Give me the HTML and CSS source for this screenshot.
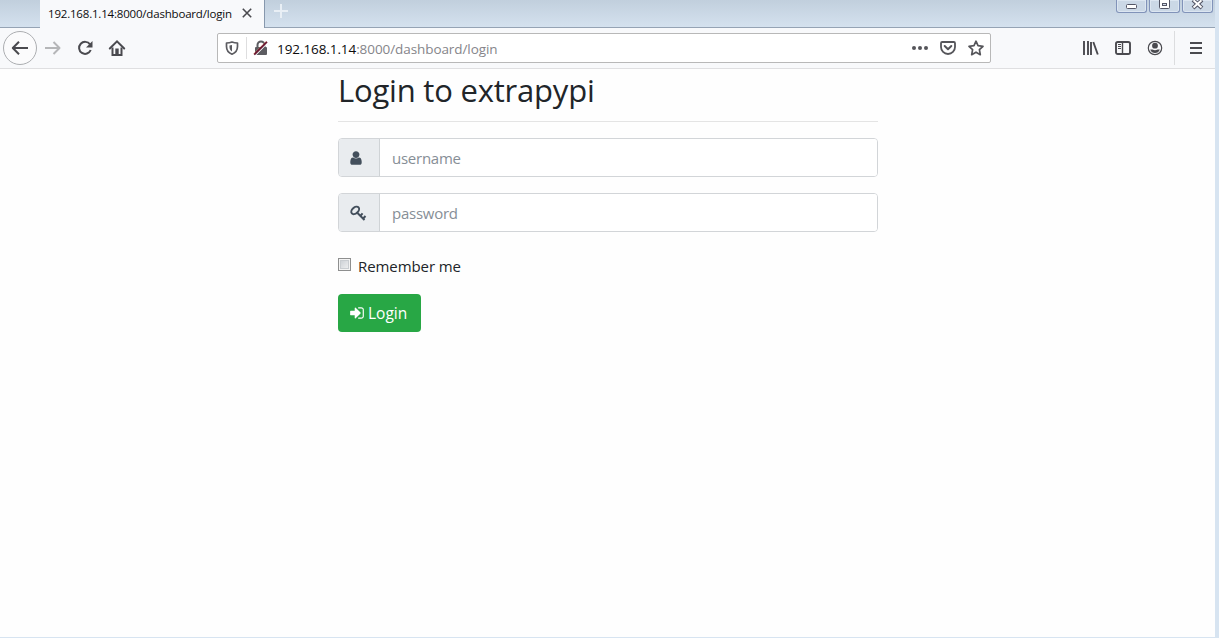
FILE: index.html
```html
<!DOCTYPE html>
<html lang="en">
<head>
<meta charset="utf-8">
<title>Login to extrapypi</title>
<link rel="stylesheet" href="styles.css">
</head>
<body>
<div class="window">
  <header class="titlebar">
    <div class="tab">
      <span class="tab-title">192.168.1.14:8000/dashboard/login</span>
      <svg class="tab-close" width="10" height="10" viewBox="0 0 10 10"><path d="M.8.8l8.4 8.4M9.2.8L.8 9.2" stroke="#4a4a4f" stroke-width="1.6"/></svg>
    </div>
    <svg class="new-tab" width="14" height="14" viewBox="0 0 14 14"><path d="M7 0v14M0 7h14" stroke="#e9eff5" stroke-width="2"/></svg>
    <div class="controls">
      <div class="control"><svg width="13" height="12" viewBox="0 0 13 12"><rect x="1.5" y="4.5" width="10" height="4" rx="1" fill="#fff" stroke="#535666"/></svg></div>
      <div class="control"><svg width="13" height="12" viewBox="0 0 13 12"><rect x="1.5" y="-1" width="10" height="9.5" rx="1" fill="#fff" stroke="#535666"/><rect x="4.500" y="3.500" width="4" height="2" fill="#d5deeb" stroke="#535666"/></svg></div>
      <div class="control"><svg width="13" height="12" viewBox="0 0 13 12"><path d="M2 0l9 8M11 0L2 8" stroke="#535666" stroke-width="4"/><path d="M2.5.3l8 7.2M10.5.3l-8 7.2" stroke="#fff" stroke-width="2"/></svg></div>
    </div>
  </header>
  <nav class="toolbar">
    <div class="back"><svg width="18" height="16" viewBox="0 0 18 16"><path d="M17 8H2M8 1.8L1.8 8 8 14.2" fill="none" stroke="#4a4a4f" stroke-width="2" stroke-linejoin="round"/></svg></div>
    <svg class="nav-icon forward" width="16" height="16" viewBox="0 0 16 16"><path d="M0 8h14M8.5 2l6 6-6 6" fill="none" stroke="#b5b6b8" stroke-width="2" stroke-linejoin="round"/></svg>
    <svg class="nav-icon" width="16" height="16" viewBox="0 0 16 16"><path d="M13 4.4A6 6 0 1 0 13.7 10" fill="none" stroke="#4a4a4f" stroke-width="2"/><path d="M15.5 1v6.5H9z" fill="#4a4a4f"/></svg>
    <svg class="nav-icon" width="16" height="16" viewBox="0 0 16 16"><path d="M.8 8.5L8 1.4l7.2 7.1" fill="none" stroke="#4a4a4f" stroke-width="2" stroke-linecap="round"/><path d="M3.5 7.5V15h9V7.5" fill="none" stroke="#4a4a4f" stroke-width="2"/><path d="M6.3 8.5h3.4V15H6.3z" fill="#4a4a4f"/></svg>
    <div class="urlbar">
      <svg class="shield" width="14" height="14" viewBox="0 0 14 14"><path d="M7 1C5 1.8 3.2 2 1.5 2v3.5C1.5 9.500 4 12 7 13.200 10 12 12.500 9.500 12.500 5.500V2C10.800 2 9 1.800 7 1z" fill="none" stroke="#5c5c61" stroke-width="1.700" stroke-linejoin="round"/><path d="M7 4L4.500 4.400V6c0 2 1 3.500 2.500 4.500z" fill="#5c5c61"/></svg>
      <span class="divider"></span>
      <svg class="lock" width="16" height="16" viewBox="0 0 16 16"><path d="M4.500 7V5a3.500 3.500 0 0 1 7 0v2" fill="none" stroke="#5c5c61" stroke-width="2"/><rect x="2" y="7" width="12" height="8" rx="1" fill="#5c5c61"/><path d="M2.200 15.400L14.900 2.600" stroke="#fff" stroke-width="1.200"/><path d="M.6 14L13.400 1.200" stroke="#e8a070" stroke-width=".8"/><path d="M1.200 14.600L14 1.800" stroke="#6b1530" stroke-width="1.700"/></svg>
      <span class="url"><b>192.168.1.14</b>:8000/dashboard/login</span>
      <svg class="page-icon" width="16" height="16" viewBox="0 0 16 16"><g fill="#55555a"><circle cx="2" cy="8" r="2"/><circle cx="8" cy="8" r="2"/><circle cx="14" cy="8" r="2"/></g></svg>
      <svg class="page-icon" width="16" height="16" viewBox="0 0 16 16"><path d="M2.200 2h11.600q1.200 0 1.200 1.200V7A7 7 0 0 1 1 7V3.200Q1 2 2.200 2z" fill="none" stroke="#55555a" stroke-width="1.800"/><path d="M4.700 6L8 9.200 11.300 6" fill="none" stroke="#55555a" stroke-width="2" stroke-linecap="round" stroke-linejoin="round"/></svg>
      <svg class="page-icon" width="16" height="16" viewBox="0 0 16 16"><path d="M8 1.200l2 4.500 5 .6-3.600 3.400.9 5L8 12.200l-4.300 2.500.9-5L1 6.300l5-.6z" fill="none" stroke="#55555a" stroke-width="1.700" stroke-linejoin="round"/></svg>
    </div>
    <div class="tools">
      <svg width="16" height="16" viewBox="0 0 16 16"><path d="M1 1v14M5 1v14M8 2v13M10.300 2l4.500 12.500" fill="none" stroke="#4a4a4f" stroke-width="1.900"/></svg>
      <svg width="16" height="16" viewBox="0 0 16 16"><rect x="1" y="2" width="14" height="12" rx="1.800" fill="none" stroke="#4a4a4f" stroke-width="1.900"/><path d="M7.500 2v12" stroke="#4a4a4f" stroke-width="1.400"/><path d="M3 4.500h3M3 6.500h3M3 8.500h3" stroke="#4a4a4f"/></svg>
      <svg width="16" height="16" viewBox="0 0 16 16"><circle cx="8" cy="8" r="6.700" fill="none" stroke="#4a4a4f" stroke-width="1.200"/><circle cx="8" cy="5.700" r="2.900" fill="#4a4a4f"/><path d="M3.200 9.600h2.300q2.500 1.300 5 0h2.300Q11.500 13.100 8 13.100T3.200 9.600z" fill="#4a4a4f"/></svg>
    </div>
    <svg class="menu" width="12" height="12" viewBox="0 0 12 12"><path d="M0 1h12M0 6h12M0 11h12" stroke="#4a4a4f" stroke-width="2"/></svg>
  </nav>
  <main class="page">
    <form class="login">
      <h2 class="heading">Login to extrapypi</h2>
      <div class="group">
        <span class="addon"><svg width="12" height="16" viewBox="0 0 1280 1792"><path fill="#434f5c" d="M1280 1399q0 109-62.500 187t-150.500 78H213q-88 0-150.500-78T0 1399q0-85 8.500-160.500t31.500-152 58.500-131 94-89T327 832q131 128 313 128t313-128q76 0 134.500 34.500t94 89 58.500 131 31.500 152 8.500 160.500zM1024 512q0 159-112.500 271.500T640 896 368.500 783.500 256 512t112.500-271.500T640 128t271.500 112.500T1024 512z"/></svg></span>
        <input class="field" type="text" placeholder="username">
      </div>
      <div class="group">
        <span class="addon"><svg width="16" height="16" viewBox="0 0 16 16"><ellipse cx="5.200" cy="5.400" rx="4.500" ry="3" transform="rotate(-42 5.200 5.400)" fill="none" stroke="#434f5c" stroke-width="2"/><path d="M6.500 7l8 8" stroke="#434f5c" stroke-width="2"/><path d="M10 11.200l2.600-2.800M12.700 14l2.800-3" stroke="#434f5c" stroke-width="2"/></svg></span>
        <input class="field" type="text" placeholder="password">
      </div>
      <label class="remember"><input class="check" type="checkbox"><span>Remember me</span></label>
      <button class="submit" type="button"><svg width="16" height="16" viewBox="0 0 1792 1792"><path fill="#fff" d="M1312 896q0 26-19 45l-544 544q-19 19-45 19t-45-19-19-45v-288H192q-26 0-45-19t-19-45V704q0-26 19-45t45-19h448V352q0-26 19-45t45-19 45 19l544 544q19 19 19 45zm352-352v704q0 119-84.500 203.500T1376 1536h-320q-13 0-22.500-9.500t-9.500-22.500q0-4-1-20t-.5-26.500 3-23.500 10-19.500 20.500-6.500h320q66 0 113-47t47-113V544q0-66-47-113t-113-47h-312l-11.500-1-11.500-3-8-5.500-7-9-2-13.500q0-4-1-20t-.5-26.500 3-23.500 10-19.500 20.500-6.500h320q119 0 203.500 84.500T1664 544z"/></svg><span>Login</span></button>
    </form>
  </main>
</div>
</body>
</html>
```
FILE: styles.css
```css
* { box-sizing: border-box; }

body {
  margin: 0;
  height: 638px;
  overflow: hidden;
  background: #d7e4f1;
  font-family: "Open Sans", "Noto Sans", sans-serif;
  color: #212529;
}

svg { display: block; flex: none; overflow: visible; }

.window { display: flex; flex-direction: column; height: 637px; }

/* Title bar */
.titlebar {
  display: flex;
  flex: none;
  width: 1215px;
  height: 28px;
  padding-left: 40px;
  background: linear-gradient(#c1cfdd, #d5e2ef);
  box-shadow: inset 0 -1px #95a3b4;
}
.tab {
  display: flex;
  align-items: center;
  width: 225px;
  height: 28px;
  padding: 0 12px 2px 8px;
  background: #f8f9fb;
  border-right: 1px solid #8798ad;
}
.tab-title { width: 194px; font-size: 11.5px; color: #0c0c0d; white-space: nowrap; letter-spacing: -0.19px; }
.new-tab { margin: 4px 0 0 9px; }
.controls { display: flex; gap: 2px; margin-left: auto; padding-right: 2px; }
.control {
  display: flex;
  justify-content: center;
  width: 31px;
  height: 13px;
  border: 1px solid #8193b9;
  border-top: 0;
  border-radius: 0 0 3px 3px;
  background: #cbd8e6;
  box-shadow: inset 0 0 0 1px #dce6f1;
}

/* Toolbar */
.toolbar {
  display: flex;
  align-items: center;
  flex: none;
  width: 1215px;
  height: 41px;
  padding-left: 3px;
  background: #f8f9fb;
  border-bottom: 1px solid #dfdfe1;
}
.back {
  display: flex;
  align-items: center;
  justify-content: center;
  width: 34px;
  height: 34px;
  border: 1px solid #acaeb1;
  border-radius: 50%;
  background: #fbfbfc;
}
.nav-icon { margin-left: 16px; }
.forward { margin-left: 8px; }
.urlbar {
  display: flex;
  align-items: center;
  width: 774px;
  height: 30px;
  margin-left: 92px;
  padding: 0 6px 0 7px;
  border: 1px solid #b8b8b8;
  border-radius: 2px;
  background: #fff;
}
.divider { width: 1px; height: 22px; margin: 0 6px 0 7px; background: #dededf; }
.url { margin: 0 auto 0 8px; padding-top: 1px; font-size: 13.5px; color: #85858a; white-space: nowrap; letter-spacing: -0.08px; }
.url b { font-weight: 400; color: #0c0c0d; }
.page-icon { margin-left: 12px; }
.tools { display: flex; gap: 16px; margin-left: 92px; }
.menu { box-sizing: content-box; margin-left: 11px; padding: 11px 0 11px 15px; border-left: 1px solid #dcdddf; }

/* Page */
.page { flex: 1; width: 1215px; background: #fefefe; }
.login { display: flex; flex-direction: column; width: 540px; margin-left: 338px; }
.heading {
  height: 53px;
  margin: 0 0 16px;
  border-bottom: 1px solid #e4e4e4;
  font-size: 31px;
  font-weight: 400;
  line-height: 42px;
  white-space: nowrap;
  letter-spacing: -0.2px;
}
.group {
  display: flex;
  height: 39px;
  margin-bottom: 16px;
  border: 1px solid #d2d5d8;
  border-radius: 4px;
  overflow: hidden;
}
.addon {
  display: flex;
  align-items: center;
  width: 41px;
  padding-left: 11px;
  background: #e9ecef;
  border-right: 1px solid #cfd3d6;
}
.field {
  flex: 1;
  min-width: 0;
  padding: 1px 12px 0;
  border: 0;
  outline: 0;
  background: #fff;
  font: 15px "Open Sans", sans-serif;
  letter-spacing: -0.25px;
}
.field::placeholder { color: #868e96; opacity: 1; }
.remember { display: flex; align-items: center; height: 24px; margin-top: 6px; font-size: 15px; letter-spacing: -0.08px; white-space: nowrap; }
.check {
  appearance: none;
  width: 13px;
  height: 13px;
  margin: 0 7px 3px 0;
  border: 1px solid #8e8f8f;
  background: linear-gradient(135deg, #c6cbd1, #f5f5f5);
  box-shadow: inset 0 0 0 1px #f4f4f4, inset 0 0 0 2px #c9cdd1;
}
.submit {
  display: flex;
  align-items: center;
  gap: 3px;
  width: 83px;
  height: 38px;
  margin-top: 16px;
  padding: 0 11px;
  border: 0;
  border-radius: 4px;
  background: #28a745;
  color: #fff;
  font: 15.5px "Open Sans", sans-serif;
}
```
